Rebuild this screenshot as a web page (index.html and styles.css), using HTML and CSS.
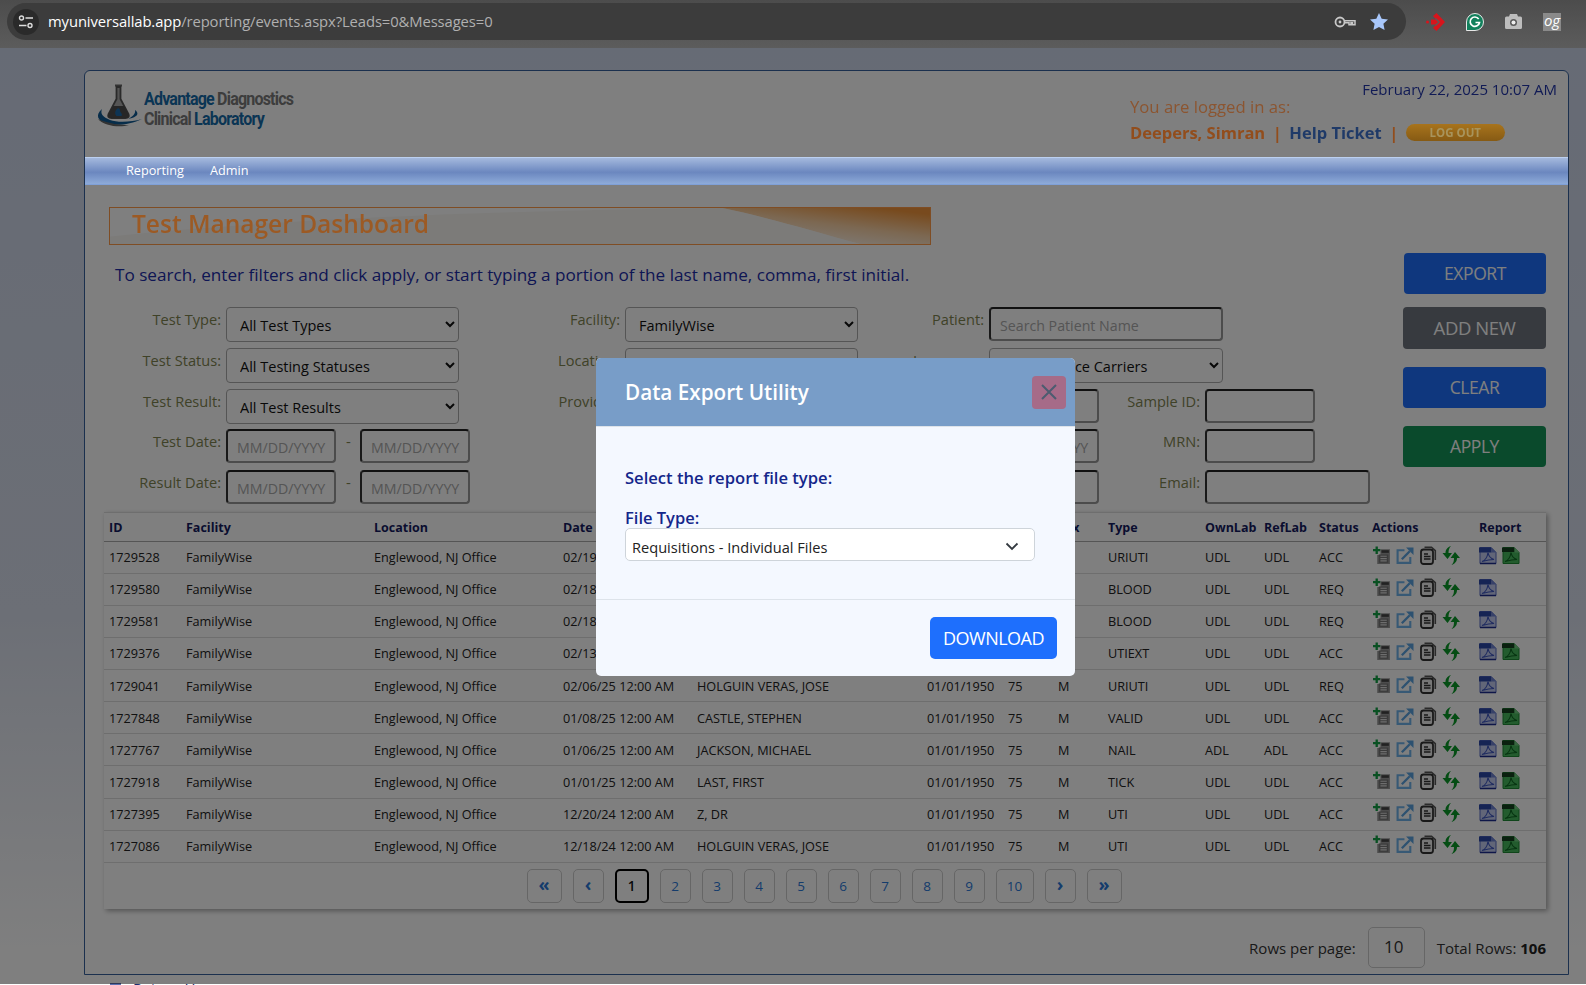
FILE: index.html
```html
<!DOCTYPE html>
<html lang="en">
<head>
    <meta charset="UTF-8">
    <meta name="viewport" content="width=device-width, initial-scale=1.0">
    <title>Test Manager Dashboard</title>
    <link rel="stylesheet" href="styles.css">
</head>
<body>
    <!-- shared table icons -->
    <svg class="sprites" width="0" height="0">
        <symbol id="i-add" viewBox="0 0 17 17">
            <path d="M3.5 0v7M0 3.5h7" stroke="#12a045" stroke-width="2.2" fill="none"/>
            <path d="M7 2.5h9v14H4V8h3z" fill="#999"/>
            <path d="M5.5 7.5h9v8h-9z" fill="#777"/>
            <path d="M7 9.2h6M7 11.4h6M7 13.6h6" stroke="#ddd" stroke-width="1.1"/>
            <path d="M8 3.5h7V6H8z" fill="#444"/>
        </symbol>
        <symbol id="i-share" viewBox="0 0 17 17">
            <path d="M8 3.5H1.5v12h12V10" fill="none" stroke="#6fb2ea" stroke-width="2"/>
            <path d="M5.5 12L13 4.5" stroke="#5aa3e0" stroke-width="2.2"/>
            <path d="M9.5 1h7v7z" fill="#5aa3e0"/>
        </symbol>
        <symbol id="i-copy" viewBox="0 0 17 19">
            <path d="M5 1.2h7l3.800 3.500V14" fill="none" stroke="#555" stroke-width="1.6"/>
            <rect x="1.5" y="3.5" width="12" height="14.5" rx="2.5" fill="#eee" stroke="#333" stroke-width="1.8"/>
            <path d="M4.500 8h4M4.500 10.500h6.500M4.500 13h6.500" stroke="#333" stroke-width="1.3"/>
        </symbol>
        <symbol id="i-sync" viewBox="0 0 18 19">
            <path d="M9 0C7 2 6.500 4 6.500 7H10L5.500 13 .5 7h3C3.500 4 5 1.500 9 0z" fill="#0a9a28"/>
            <path d="M9.500 19C11.500 17 12 15 12 12H8.500L13 6l5 6h-3c0 3-1.500 5.500-5.500 7z" fill="#0a9a28"/>
        </symbol>
        <symbol id="i-pdf" viewBox="0 0 18 18">
            <path d="M1 1h11l5 5v11H1z" fill="#c4cdf0" stroke="#5468c4" stroke-width="1"/>
            <path d="M0 1h12.500v5H0z" fill="#2c48a8"/>
            <path d="M12.500 1l5 5h-5z" fill="#6f82d2"/>
            <path d="M3 15c3-1 5.500-5 6-9 .5 3 2.500 6 6 7-3 0-7 .6-12 2z" fill="none" stroke="#4058c0" stroke-width="1.2"/>
            <path d="M1 17h16" stroke="#1c2c90" stroke-width="1.5"/>
        </symbol>
        <symbol id="i-xls" viewBox="0 0 18 18">
            <path d="M1 1h11l5 5v11H1z" fill="#46b85c" stroke="#1e8a34" stroke-width="1"/>
            <path d="M0 1h12.500v4.500H0z" fill="#14401e"/>
            <path d="M12.500 1l5 5h-5z" fill="#70cc80"/>
            <path d="M3 15c3-1 5.500-5 6-9 .5 3 2.500 6 6 7-3 0-7 .6-12 2z" fill="none" stroke="#0f6a24" stroke-width="1.2"/>
        </symbol>
    </svg>

    <div class="browser-bar">
        <div class="omnibox">
            <span class="site-btn">
                <svg width="16" height="14" viewBox="0 0 16 14"><circle cx="3.5" cy="3" r="2" fill="none" stroke="#ddd" stroke-width="1.4"/><path d="M7.500 3H15M1 10.500h7.500" stroke="#ddd" stroke-width="1.5"/><circle cx="12" cy="10.5" r="2" fill="none" stroke="#ddd" stroke-width="1.4"/></svg>
            </span>
            <span class="url"><b>myuniversallab.app</b>/reporting/events.aspx?Leads=0&amp;Messages=0</span>
            <svg class="omni-key" width="22" height="12" viewBox="0 0 22 12"><circle cx="6" cy="6" r="4.5" fill="none" stroke="#c8c8c8" stroke-width="1.8"/><circle cx="6" cy="6" r="1.4" fill="#c8c8c8"/><path d="M10.500 4.800h10.500v4h-2.500v-2h-1.500v2h-2v-2h-4.500" fill="none" stroke="#c8c8c8" stroke-width="1.5"/></svg>
            <svg class="omni-star" width="18" height="17" viewBox="0 0 18 17"><path d="M9 0l2.700 5.700 6.300.8-4.600 4.300 1.200 6.200L9 14l-5.600 3 1.200-6.200L0 6.500l6.300-.8z" fill="#a8c7fa"/></svg>
        </div>
        <div class="extensions">
            <svg width="19" height="18" viewBox="0 0 19 18"><path d="M10.500 0l8.500 9-8.500 9L7 15l3-3.500H5v-5h5L7 3z" fill="#d8141c"/><path d="M9.500 5.500L13 9l-3.500 3.500" fill="none" stroke="#5a5a5a" stroke-width="1.3"/><circle cx="1.5" cy="9" r="1.5" fill="#d8141c"/></svg>
            <svg width="18" height="18" viewBox="0 0 18 18"><path d="M9 .5a8.500 8.500 0 0 1 0 17H.5V9A8.500 8.500 0 0 1 9 .5z" fill="#12805c" stroke="#e8e8e8" stroke-width="1"/><path d="M12.700 6a4.700 4.700 0 1 0 .8 3.500H9.500" fill="none" stroke="#fff" stroke-width="1.7"/></svg>
            <svg width="17" height="15" viewBox="0 0 17 15"><path d="M5 0h7l1 2.500h2.500q1.500 0 1.500 1.500v9.500q0 1.500-1.500 1.500h-14Q0 15 0 13.500V4q0-1.500 1.500-1.500H4z" fill="#bdbdbd"/><circle cx="8.5" cy="8.5" r="3.5" fill="#5a5a5a"/><circle cx="8.5" cy="8.5" r="2" fill="#eee"/></svg>
            <span class="og-icon">og</span>
        </div>
    </div>

    <div class="page">
        <div class="panel">
            <div class="site-header">
                <div class="logo">
                    <svg width="48" height="44" viewBox="0 0 48 44">
                        <path d="M20 1.500h7" stroke="#666" stroke-width="2"/>
                        <path d="M21.500 3h4v12l8 15q1.500 4-3 4H16.500q-4.500 0-3-4l8-15z" fill="#aaa" stroke="#555" stroke-width="1.8"/>
                        <path d="M18 22h11.500l4 8q1.500 4-3 4H16.500q-4.500 0-3-4z" fill="#4c4c4c"/>
                        <path d="M21 26c2-3 4-2 4 .5s3 3 1.500 5.500h-5c-2-2-1.500-4 -.5-6z" fill="#1a68a8"/>
                        <path d="M7 25C0 31 2 37 13 40c10 2 24 0 34-5-10 3-24 4-32 1C8 33 5 30 7 25z" fill="#0f5a94"/>
                        <path d="M40 26c4 3 3 6-3 8l-4 1c4-2 8-5 7-9z" fill="#0f5a94"/>
                        <path d="M3 35c6 7 22 9 31 6-8 0-20-1-31-6z" fill="#666"/>
                    </svg>
                    <div class="logo-text">
                        <div><span class="logo-blue">Advantage</span> Diagnostics</div>
                        <div>Clinical <span class="logo-blue">Laboratory</span></div>
                    </div>
                </div>
                <div class="user-info">
                    <div class="today">February 22, 2025 10:07 AM</div>
                    <div class="logged-as">You are logged in as:</div>
                    <div class="user-links">
                        <span class="user-name">Deepers, Simran</span>
                        <span class="sep">|</span>
                        <span class="help-link">Help Ticket</span>
                        <span class="sep">|</span>
                        <span class="logout">LOG OUT</span>
                    </div>
                </div>
            </div>

            <div class="main-nav">
                <span>Reporting</span>
                <span>Admin</span>
            </div>

            <div class="title-bar">
                <svg class="title-swoosh" viewBox="0 0 822 38" preserveAspectRatio="none">
                    <defs>
                        <linearGradient id="swoosh" x1=".1" y1=".9" x2=".75" y2="0">
                            <stop offset="0" stop-color="#fff"/>
                            <stop offset=".55" stop-color="#f8d0a4"/>
                            <stop offset="1" stop-color="#f0953c"/>
                        </linearGradient>
                    </defs>
                    <path d="M614 0C660 10 710 26 752 38H822V0z" fill="url(#swoosh)"/>
                    <path d="M0 38V30C200 8 450 2 614 0C660 10 710 26 752 38z" fill="#f4efe8" opacity=".5"/>
                </svg>
                <h1>Test Manager Dashboard</h1>
            </div>

            <div class="search-area">
                <div class="search-left">
                    <p class="hint">To search, enter filters and click apply, or start typing a portion of the last name, comma, first initial.</p>
                    <div class="filters">
                        <label class="c1">Test Type:</label>
                        <select class="field"><option>All Test Types</option></select>
                        <label class="c3">Facility:</label>
                        <select class="field"><option>FamilyWise</option></select>
                        <label class="c5">Patient:</label>
                        <input class="text-input wide" type="text" placeholder="Search Patient Name">

                        <label class="c1">Test Status:</label>
                        <select class="field"><option>All Testing Statuses</option></select>
                        <label class="c3">Location:</label>
                        <select class="field"><option>All Locations</option></select>
                        <label class="c5">Insurance:</label>
                        <select class="field wide"><option>All Insurance Carriers</option></select>

                        <label class="c1">Test Result:</label>
                        <select class="field"><option>All Test Results</option></select>
                        <label class="c3">Provider:</label>
                        <select class="field"><option>All Providers</option></select>
                        <input class="text-input c6" type="text">
                        <label class="c7">Sample ID:</label>
                        <input class="text-input small" type="text">

                        <label class="c1">Test Date:</label>
                        <div class="date-pair">
                            <input class="text-input small" type="text" placeholder="MM/DD/YYYY">
                            <span class="dash">-</span>
                            <input class="text-input small" type="text" placeholder="MM/DD/YYYY">
                        </div>
                        <input class="text-input c6" type="text" placeholder="MM/DD/YYYY">
                        <label class="c7">MRN:</label>
                        <input class="text-input small" type="text">

                        <label class="c1">Result Date:</label>
                        <div class="date-pair">
                            <input class="text-input small" type="text" placeholder="MM/DD/YYYY">
                            <span class="dash">-</span>
                            <input class="text-input small" type="text" placeholder="MM/DD/YYYY">
                        </div>
                        <input class="text-input c6" type="text">
                        <label class="c7">Email:</label>
                        <input class="text-input" type="text">
                    </div>
                </div>
                <div class="side-buttons">
                    <button class="btn btn-export">EXPORT</button>
                    <button class="btn btn-grey">ADD NEW</button>
                    <button class="btn btn-blue">CLEAR</button>
                    <button class="btn btn-green">APPLY</button>
                </div>
            </div>

            <div class="results-card">
                <table class="results">
                    <colgroup>
                        <col class="w-id"><col class="w-fac"><col class="w-loc"><col class="w-date"><col class="w-pat">
                        <col class="w-dob"><col class="w-age"><col class="w-sex"><col class="w-type"><col class="w-own">
                        <col class="w-ref"><col class="w-status"><col class="w-act"><col class="w-rep">
                    </colgroup>
                    <thead>
                        <tr><th>ID</th><th>Facility</th><th>Location</th><th>Date</th><th>Patient</th><th>DOB</th><th>Age</th><th>Sex</th><th>Type</th><th>OwnLab</th><th>RefLab</th><th>Status</th><th>Actions</th><th>Report</th></tr>
                    </thead>
                    <tbody>
                        <tr><td>1729528</td><td>FamilyWise</td><td>Englewood, NJ Office</td><td>02/19/25 12:00 AM</td><td></td><td></td><td></td><td></td><td>URIUTI</td><td>UDL</td><td>UDL</td><td>ACC</td>
                            <td class="icons"><svg class="ic"><use href="#i-add"/></svg><svg class="ic"><use href="#i-share"/></svg><svg class="ic"><use href="#i-copy"/></svg><svg class="ic"><use href="#i-sync"/></svg></td>
                            <td class="icons rep"><svg class="ic"><use href="#i-pdf"/></svg><svg class="ic"><use href="#i-xls"/></svg></td></tr>
                        <tr><td>1729580</td><td>FamilyWise</td><td>Englewood, NJ Office</td><td>02/18/25 12:00 AM</td><td></td><td></td><td></td><td></td><td>BLOOD</td><td>UDL</td><td>UDL</td><td>REQ</td>
                            <td class="icons"><svg class="ic"><use href="#i-add"/></svg><svg class="ic"><use href="#i-share"/></svg><svg class="ic"><use href="#i-copy"/></svg><svg class="ic"><use href="#i-sync"/></svg></td>
                            <td class="icons rep"><svg class="ic"><use href="#i-pdf"/></svg></td></tr>
                        <tr><td>1729581</td><td>FamilyWise</td><td>Englewood, NJ Office</td><td>02/18/25 12:00 AM</td><td></td><td></td><td></td><td></td><td>BLOOD</td><td>UDL</td><td>UDL</td><td>REQ</td>
                            <td class="icons"><svg class="ic"><use href="#i-add"/></svg><svg class="ic"><use href="#i-share"/></svg><svg class="ic"><use href="#i-copy"/></svg><svg class="ic"><use href="#i-sync"/></svg></td>
                            <td class="icons rep"><svg class="ic"><use href="#i-pdf"/></svg></td></tr>
                        <tr><td>1729376</td><td>FamilyWise</td><td>Englewood, NJ Office</td><td>02/13/25 12:00 AM</td><td></td><td></td><td></td><td></td><td>UTIEXT</td><td>UDL</td><td>UDL</td><td>ACC</td>
                            <td class="icons"><svg class="ic"><use href="#i-add"/></svg><svg class="ic"><use href="#i-share"/></svg><svg class="ic"><use href="#i-copy"/></svg><svg class="ic"><use href="#i-sync"/></svg></td>
                            <td class="icons rep"><svg class="ic"><use href="#i-pdf"/></svg><svg class="ic"><use href="#i-xls"/></svg></td></tr>
                        <tr><td>1729041</td><td>FamilyWise</td><td>Englewood, NJ Office</td><td>02/06/25 12:00 AM</td><td>HOLGUIN VERAS, JOSE</td><td>01/01/1950</td><td>75</td><td>M</td><td>URIUTI</td><td>UDL</td><td>UDL</td><td>REQ</td>
                            <td class="icons"><svg class="ic"><use href="#i-add"/></svg><svg class="ic"><use href="#i-share"/></svg><svg class="ic"><use href="#i-copy"/></svg><svg class="ic"><use href="#i-sync"/></svg></td>
                            <td class="icons rep"><svg class="ic"><use href="#i-pdf"/></svg></td></tr>
                        <tr><td>1727848</td><td>FamilyWise</td><td>Englewood, NJ Office</td><td>01/08/25 12:00 AM</td><td>CASTLE, STEPHEN</td><td>01/01/1950</td><td>75</td><td>M</td><td>VALID</td><td>UDL</td><td>UDL</td><td>ACC</td>
                            <td class="icons"><svg class="ic"><use href="#i-add"/></svg><svg class="ic"><use href="#i-share"/></svg><svg class="ic"><use href="#i-copy"/></svg><svg class="ic"><use href="#i-sync"/></svg></td>
                            <td class="icons rep"><svg class="ic"><use href="#i-pdf"/></svg><svg class="ic"><use href="#i-xls"/></svg></td></tr>
                        <tr><td>1727767</td><td>FamilyWise</td><td>Englewood, NJ Office</td><td>01/06/25 12:00 AM</td><td>JACKSON, MICHAEL</td><td>01/01/1950</td><td>75</td><td>M</td><td>NAIL</td><td>ADL</td><td>ADL</td><td>ACC</td>
                            <td class="icons"><svg class="ic"><use href="#i-add"/></svg><svg class="ic"><use href="#i-share"/></svg><svg class="ic"><use href="#i-copy"/></svg><svg class="ic"><use href="#i-sync"/></svg></td>
                            <td class="icons rep"><svg class="ic"><use href="#i-pdf"/></svg><svg class="ic"><use href="#i-xls"/></svg></td></tr>
                        <tr><td>1727918</td><td>FamilyWise</td><td>Englewood, NJ Office</td><td>01/01/25 12:00 AM</td><td>LAST, FIRST</td><td>01/01/1950</td><td>75</td><td>M</td><td>TICK</td><td>UDL</td><td>UDL</td><td>ACC</td>
                            <td class="icons"><svg class="ic"><use href="#i-add"/></svg><svg class="ic"><use href="#i-share"/></svg><svg class="ic"><use href="#i-copy"/></svg><svg class="ic"><use href="#i-sync"/></svg></td>
                            <td class="icons rep"><svg class="ic"><use href="#i-pdf"/></svg><svg class="ic"><use href="#i-xls"/></svg></td></tr>
                        <tr><td>1727395</td><td>FamilyWise</td><td>Englewood, NJ Office</td><td>12/20/24 12:00 AM</td><td>Z, DR</td><td>01/01/1950</td><td>75</td><td>M</td><td>UTI</td><td>UDL</td><td>UDL</td><td>ACC</td>
                            <td class="icons"><svg class="ic"><use href="#i-add"/></svg><svg class="ic"><use href="#i-share"/></svg><svg class="ic"><use href="#i-copy"/></svg><svg class="ic"><use href="#i-sync"/></svg></td>
                            <td class="icons rep"><svg class="ic"><use href="#i-pdf"/></svg><svg class="ic"><use href="#i-xls"/></svg></td></tr>
                        <tr><td>1727086</td><td>FamilyWise</td><td>Englewood, NJ Office</td><td>12/18/24 12:00 AM</td><td>HOLGUIN VERAS, JOSE</td><td>01/01/1950</td><td>75</td><td>M</td><td>UTI</td><td>UDL</td><td>UDL</td><td>ACC</td>
                            <td class="icons"><svg class="ic"><use href="#i-add"/></svg><svg class="ic"><use href="#i-share"/></svg><svg class="ic"><use href="#i-copy"/></svg><svg class="ic"><use href="#i-sync"/></svg></td>
                            <td class="icons rep"><svg class="ic"><use href="#i-pdf"/></svg><svg class="ic"><use href="#i-xls"/></svg></td></tr>
                    </tbody>
                </table>
                <div class="pager">
                    <span class="pg pg-first">«</span>
                    <span class="pg pg-arrow">‹</span>
                    <span class="pg pg-active">1</span>
                    <span class="pg">2</span>
                    <span class="pg">3</span>
                    <span class="pg">4</span>
                    <span class="pg">5</span>
                    <span class="pg">6</span>
                    <span class="pg">7</span>
                    <span class="pg">8</span>
                    <span class="pg">9</span>
                    <span class="pg pg-ten">10</span>
                    <span class="pg pg-arrow">›</span>
                    <span class="pg pg-first">»</span>
                </div>
            </div>

            <div class="table-foot">
                <span>Rows per page:</span>
                <span class="rows-box">10</span>
                <span>Total Rows: <b>106</b></span>
            </div>
        </div>
        <div class="below-panel">
            <span class="home-dot"></span>
            <span>Return Home</span>
        </div>
    </div>

    <!-- export dialog, sits over the dimmed page -->
    <div class="backdrop"></div>
    <div class="modal">
        <div class="modal-head">
            <span class="modal-title">Data Export Utility</span>
            <span class="modal-close">
                <svg width="18" height="18" viewBox="0 0 18 18"><path d="M2 2l14 14M16 2L2 16" stroke="#4c5c70" stroke-width="2"/></svg>
            </span>
        </div>
        <div class="modal-body">
            <div class="modal-lead">Select the report file type:</div>
            <div class="modal-label">File Type:</div>
            <div class="modal-select">
                <span>Requisitions - Individual Files</span>
                <svg width="14" height="9" viewBox="0 0 14 9"><path d="M1.500 1.500L7 7l5.500-5.500" fill="none" stroke="#343a40" stroke-width="1.8"/></svg>
            </div>
        </div>
        <div class="modal-foot">
            <button class="download">DOWNLOAD</button>
        </div>
    </div>
</body>
</html>
```

FILE: styles.css
```css
* {
    box-sizing: border-box;
}

html, body {
    height: 985px;
}

body {
    margin: 0;
    overflow: hidden;
    font-family: "Open Sans", Arial, sans-serif;
    background-color: #fff;
    color: #222;
}

.sprites {
    position: absolute;
}

/* browser chrome */
.browser-bar {
    height: 48px;
    padding: 3px 0 0 7px;
    display: flex;
    background: linear-gradient(#4c4c4c, #5c5c5c);
}

.omnibox {
    width: 1399px;
    height: 37px;
    display: flex;
    align-items: center;
    padding: 0 18px 0 6px;
    border-radius: 19px;
    background-color: #3c3c3c;
}

.site-btn {
    width: 26px;
    height: 26px;
    display: flex;
    align-items: center;
    justify-content: center;
    border-radius: 50%;
    background-color: #2a2a2a;
}

.url {
    margin-left: 9px;
    padding-bottom: 2px;
    flex: 1;
    font-size: 14.8px;
    letter-spacing: -.1px;
    color: #b0b0b0;
}

.url b {
    font-weight: 400;
    color: #fff;
}

.omni-key {
    margin-right: 14px;
}

.extensions {
    display: flex;
    align-items: center;
    height: 37px;
    margin-left: 20px;
    gap: 21px;
}

.og-icon {
    width: 18px;
    height: 18px;
    background-color: #8a8a8a;
    color: #fff;
    font: italic 15px/15px "Open Sans", sans-serif;
    text-align: center;
}

/* page shell */
.page {
    height: 937px;
    padding: 22px 17px 0 84px;
    background: linear-gradient(#cdd6ea, #d8deec 60%, #fff 97%);
}

.panel {
    height: 905px;
    border: 1px solid #36609c;
    border-radius: 6px 6px 0 0;
    background-color: #fff;
}

.site-header {
    height: 86px;
    display: flex;
    justify-content: space-between;
    padding: 11px 11px 0 10px;
}

.logo {
    display: flex;
    align-items: flex-start;
    gap: 1px;
    padding-top: 2px;
}

.logo-text {
    margin-top: 5px;
    font-family: "Roboto", sans-serif;
    font-weight: 700;
    font-size: 18px;
    line-height: 20px;
    letter-spacing: -.9px;
    color: #7a7a7a;
    transform: scaleX(.89);
    transform-origin: left;
}

.logo-blue {
    color: #156aa8;
}

/* this block stays above the backdrop in the original page */
.user-info {
    position: relative;
    z-index: 11;
    width: 427px;
}

.today {
    margin-top: -2px;
    text-align: right;
    font-size: 15px;
    line-height: 18px;
    color: #101a55;
}

.logged-as {
    margin-top: -3px;
    font-size: 16.7px;
    line-height: 24px;
    color: #8c5530;
}

.user-links {
    display: flex;
    align-items: center;
    gap: 7.5px;
    height: 26px;
    font-size: 16.5px;
    font-weight: 700;
}

.user-name {
    color: #924d1c;
}

.help-link {
    color: #1f3a68;
}

.sep {
    color: #924d1c;
}

.logout {
    width: 99px;
    height: 17px;
    border-radius: 9px;
    background: linear-gradient(#a8741c, #865a14);
    color: #a8945c;
    text-align: center;
    font-size: 11.5px;
    line-height: 17px;
}

.main-nav {
    position: relative;
    z-index: 11;
    height: 28px;
    display: flex;
    align-items: center;
    gap: 26px;
    padding: 0 0 2px 41px;
    border-top: 1px solid #bcd0f0;
    border-bottom: 1px solid #7fa0d8;
    background: linear-gradient(#a4b9dd, #6b87bf 55%, #8eabd9);
    color: #fff;
    font-size: 12.7px;
}

.title-bar {
    position: relative;
    width: 822px;
    height: 38px;
    margin: 22px 0 0 24px;
    border: 1px solid #ff9a48;
    background-color: #fff;
}

.title-swoosh {
    position: absolute;
    top: 0;
    left: 0;
    width: 100%;
    height: 100%;
}

.title-bar h1 {
    position: relative;
    z-index: 11;
    margin: 0;
    padding-left: 22px;
    font-size: 24.5px;
    font-weight: 600;
    line-height: 32px;
    color: #9c5a24;
}

/* search filters */
.search-area {
    display: flex;
    justify-content: space-between;
    padding: 8px 22px 0 24px;
    height: 267px;
}

.hint {
    margin: 10px 0 0 6px;
    font-size: 17.15px;
    line-height: 24px;
    font-weight: 500;
    color: #1c2ca8;
}

.filters {
    width: 1260px;
    margin-top: 20px;
    display: grid;
    grid-template-columns: 111px 243px 144px 233px 119px 110px 94px 165px;
    grid-auto-rows: 40.75px;
    column-gap: 6px;
    align-items: start;
}

.filters label {
    margin-right: -1px;
    text-align: right;
    font-size: 14.6px;
    line-height: 24px;
    color: #7e8450;
}

.c1 { grid-column: 1; }
.c3 { grid-column: 3; }
.c5 { grid-column: 5; }
.c6 { grid-column: 6; }
.c7 { grid-column: 7; }

.field {
    width: 233px;
    height: 35px;
    padding: 2px 0 0 9px;
    border: 1px solid #aaa;
    border-radius: 4px;
    background-color: #fff;
    font-family: inherit;
    font-size: 14.5px;
    color: #111;
}

.text-input {
    width: 100%;
    height: 34px;
    padding: 3px 0 0 9px;
    border: 2px solid;
    border-color: #222 #999 #999 #333;
    border-radius: 4px;
    background-color: #fff;
    font-family: inherit;
    font-size: 14.2px;
}

.wide,
.text-input.wide {
    grid-column: 6 / 9;
    width: 234px;
}

.text-input.small {
    width: 110px;
}

.text-input::placeholder {
    color: #aaa;
    opacity: 1;
}

.date-pair {
    display: flex;
    align-items: flex-start;
    gap: 10px;
}

.date-pair .dash {
    width: 4px;
    line-height: 24px;
    font-size: 15px;
    color: #7e8450;
}

.side-buttons {
    width: 143px;
    display: flex;
    flex-direction: column;
    gap: 18px;
}

.btn {
    height: 41px;
    padding-bottom: 3px;
    border: 0;
    border-radius: 4px;
    color: #fff;
    font-family: inherit;
    font-size: 17.5px;
    letter-spacing: -.4px;
}

.btn-export {
    margin: 0 0 -5px 1px;
    background-color: #1e6ffd;
}

.btn-grey {
    height: 42px;
    font-size: 18.5px;
    background-color: #6f757e;
}

.btn-blue {
    background-color: #1e6ffd;
}

.btn-green {
    background-color: #149458;
}

/* results table */
.results-card {
    width: 1442px;
    height: 397px;
    margin-left: 19px;
    border-top: 1px solid #ddd;
    box-shadow: 2px 2px 5px rgba(0, 0, 0, .35);
}

.results {
    width: 1442px;
    table-layout: fixed;
    border-collapse: collapse;
    font-size: 12.7px;
}

.w-id { width: 77px; }
.w-fac { width: 188px; }
.w-loc { width: 189px; }
.w-date { width: 134px; }
.w-pat { width: 230px; }
.w-dob { width: 81px; }
.w-age { width: 50px; }
.w-sex { width: 50px; }
.w-type { width: 97px; }
.w-own { width: 59px; }
.w-ref { width: 55px; }
.w-status { width: 53px; }
.w-act { width: 107px; }
.w-rep { width: 72px; }

.results th {
    height: 28px;
    padding: 1px 0 0 5px;
    border-bottom: 1px solid #aaa;
    text-align: left;
    font-size: 12.5px;
    font-weight: 700;
    color: #141a60;
}

.results td {
    height: 32.15px;
    padding: 0 0 0 5px;
    border-bottom: 1px solid #ddd;
    color: #222;
    white-space: nowrap;
}

.results td.icons {
    padding-left: 6px;
    padding-bottom: 3px;
    font-size: 0;
}

.results td.rep {
    padding-left: 5px;
}

.ic {
    width: 18px;
    height: 19px;
    margin-right: 5px;
}

.pager {
    display: flex;
    justify-content: center;
    gap: 11px;
    padding: 6px 2px 0 0;
}

.pg {
    width: 31px;
    height: 34px;
    border: 1px solid #ccc;
    border-radius: 5px;
    color: #2a78d8;
    text-align: center;
    font-size: 13.5px;
    line-height: 32px;
}

.pg-first {
    width: 35px;
    font-size: 18px;
    font-weight: 700;
    line-height: 28px;
}

.pg-arrow {
    font-size: 18px;
    font-weight: 700;
    line-height: 28px;
}

.pg-active {
    width: 34px;
    border: 2px solid #000;
    color: #111;
    font-weight: 600;
    line-height: 30px;
}

.pg-ten {
    width: 38px;
}

.table-foot {
    display: flex;
    justify-content: flex-end;
    align-items: center;
    gap: 12px;
    width: 1461px;
    margin-top: 18px;
    font-size: 15px;
    color: #333;
}

.rows-box {
    width: 57px;
    height: 41px;
    padding-right: 5px;
    border: 1px solid #ccc;
    border-radius: 5px;
    text-align: center;
    font-size: 17px;
    line-height: 38px;
}

.table-foot b {
    color: #222;
}

.below-panel {
    display: flex;
    gap: 12px;
    margin: 3px 0 0 26px;
    font-size: 15px;
    line-height: 20px;
    color: #1c2c70;
}

.home-dot {
    width: 11px;
    height: 11px;
    margin-top: 5px;
    background-color: #5a6fb0;
}

/* dialog */
.backdrop {
    position: fixed;
    top: 48px;
    left: 0;
    right: 0;
    bottom: 1px;
    z-index: 10;
    background-color: rgba(0, 0, 0, .5);
}

.modal {
    position: fixed;
    top: 358px;
    left: 596px;
    z-index: 20;
    width: 479px;
    height: 318px;
    border-radius: 5px;
    overflow: hidden;
    background-color: #f4f8ff;
}

.modal-head {
    height: 69px;
    display: flex;
    align-items: center;
    justify-content: space-between;
    padding: 0 9px 0 29px;
    border-bottom: 1px solid #dde3ea;
    background-color: #789dc8;
}

.modal-title {
    font-size: 20.7px;
    font-weight: 600;
    color: #fff;
}

.modal-close {
    width: 34px;
    height: 33px;
    display: flex;
    align-items: center;
    justify-content: center;
    border-radius: 4px;
    background-color: #a66b88;
}

.modal-body {
    height: 173px;
    padding: 39px 0 0 29px;
    border-bottom: 1px solid #dde3ea;
}

.modal-lead {
    font-size: 16.6px;
    font-weight: 600;
    line-height: 24px;
    color: #14278b;
}

.modal-label {
    margin-top: 18px;
    font-size: 16.5px;
    font-weight: 600;
    line-height: 20px;
    color: #14278b;
}

.modal-select {
    width: 410px;
    height: 33px;
    display: flex;
    align-items: center;
    justify-content: space-between;
    padding: 4px 15px 0 6px;
    border: 1px solid #ced4da;
    border-radius: 5px;
    background-color: #fff;
    font-size: 14.6px;
    color: #222;
}

.modal-foot {
    display: flex;
    justify-content: flex-end;
    padding: 17px 18px 0 0;
}

.download {
    width: 127px;
    height: 42px;
    border: 0;
    border-radius: 5px;
    background-color: #1e6ffd;
    color: #fff;
    font-family: inherit;
    font-size: 18px;
    letter-spacing: -.5px;
}
```
